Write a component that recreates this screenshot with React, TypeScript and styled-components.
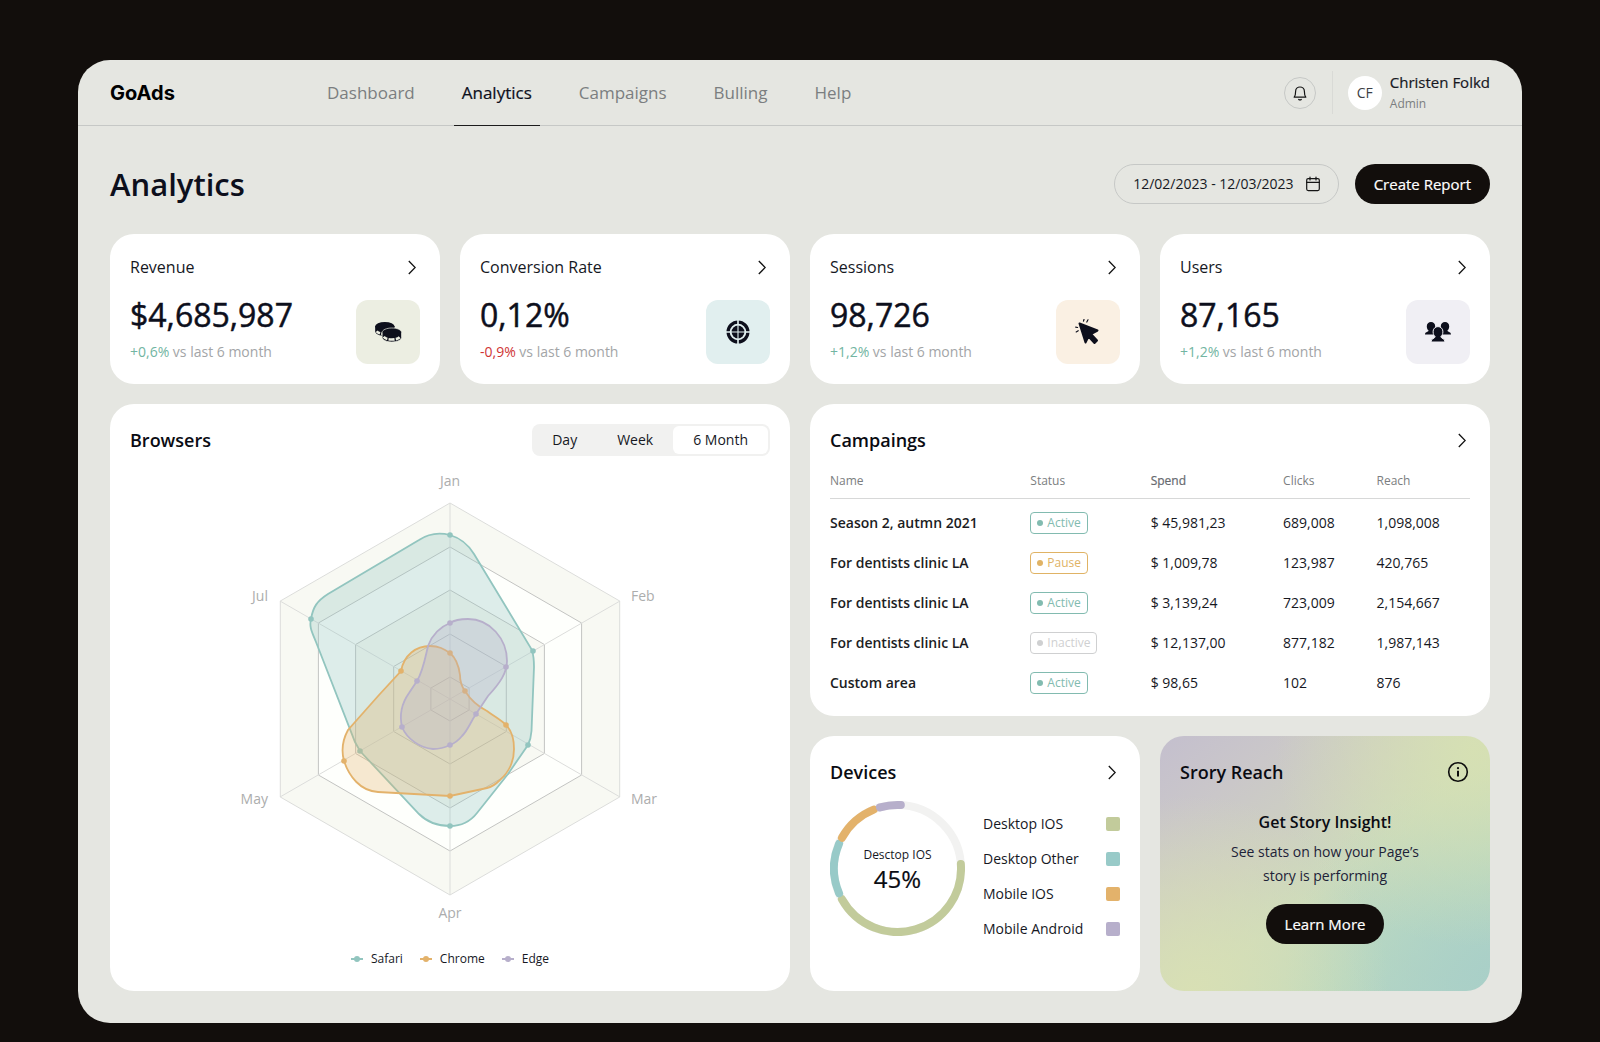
import React, { useState } from "react";
import styled, { createGlobalStyle, css } from "styled-components";

const color = {
  backdrop: "#120e0c",
  panel: "#e5e6e1",
  card: "#ffffff",
  ink: "#0d0f1c",
  black: "#120e0c",
  text: "#16181f",
  grey: "#7b7e80",
  soft: "#a3a5a7",
  line: "#c6c8c6",
  teal: "#92c5bf",
  aqua: "#98cac8",
  orange: "#e3b26b",
  lavender: "#b7afcb",
  olive: "#c2cb9b",
};

/* Open Sans ships regular and semibold only; a hairline outline gives the step between. */
const medium = css`
  -webkit-text-stroke: 0.2px currentColor;
`;

const GlobalStyle = createGlobalStyle`
  *, *::before, *::after { box-sizing: border-box; }
  body {
    margin: 0;
    background: ${color.backdrop};
    color: ${color.text};
    font-family: "Open Sans", "Noto Sans", sans-serif;
    font-size: 14px;
    line-height: 20px;
    -webkit-font-smoothing: antialiased;
  }
  h1, h2, h3, p, ul { margin: 0; padding: 0; }
  ul { list-style: none; }
  button { font: inherit; color: inherit; cursor: pointer; }
  a { color: inherit; text-decoration: none; }
`;

/* ---------- Shell ---------- */

const Page = styled.div`
  padding: 60px 78px 20px;
`;

const Panel = styled.div`
  background: ${color.panel};
  border-radius: 32px;
  overflow: hidden;
`;

const TopBar = styled.header`
  display: flex;
  align-items: stretch;
  height: 66px;
  padding: 0 32px;
  border-bottom: 1px solid ${color.line};
`;

const Logo = styled.a`
  flex: 0 0 209px;
  align-self: center;
  font-family: Inter, "Open Sans", sans-serif;
  font-size: 20px;
  font-weight: 700;
  line-height: 24px;
  color: #000;
`;

const Nav = styled.nav`
  display: flex;
  gap: 31px;
`;

const NavLink = styled.a<{ $active?: boolean }>`
  display: flex;
  align-items: center;
  margin-bottom: -1px;
  padding: 0 8px;
  font-size: 17px;
  color: ${(p) => (p.$active ? color.ink : color.grey)};
  border-bottom: 1px solid ${(p) => (p.$active ? "#1c1c1c" : "transparent")};
  ${(p) => p.$active && medium}
`;

const Account = styled.div`
  display: flex;
  align-items: center;
  margin-left: auto;
`;

const BellButton = styled.button`
  display: grid;
  place-items: center;
  width: 32px;
  height: 32px;
  padding: 0;
  background: none;
  border: 1px solid ${color.line};
  border-radius: 50%;
`;

const Divider = styled.span`
  width: 1px;
  height: 43px;
  margin: 0 15px 0 16px;
  background: #d9dad6;
`;

const Avatar = styled.span`
  display: grid;
  place-items: center;
  width: 34px;
  height: 34px;
  margin-right: 8px;
  border-radius: 50%;
  background: #fff;
  color: #3c3f45;
`;

const UserName = styled.div`
  ${medium}
  font-size: 15px;
  line-height: 22px;
`;

const UserRole = styled.div`
  font-size: 12px;
  line-height: 22px;
  color: ${color.grey};
`;

const Content = styled.main`
  padding: 38px 32px 32px;
`;

const Heading = styled.div`
  display: flex;
  align-items: center;
  gap: 16px;
  margin-bottom: 30px;
`;

const PageTitle = styled.h1`
  flex: 1;
  font-size: 31px;
  font-weight: 600;
  line-height: 38px;
  color: ${color.ink};
`;

const DateButton = styled.button`
  display: flex;
  align-items: center;
  gap: 12px;
  height: 40px;
  padding: 0 18px;
  background: none;
  border: 1px solid ${color.line};
  border-radius: 20px;
`;

const DarkButton = styled.button`
  ${medium}
  height: 40px;
  padding: 0 19px;
  border: 0;
  border-radius: 20px;
  background: ${color.black};
  color: #fff;
  font-size: 15px;
`;

const Board = styled.div`
  display: grid;
  grid-template-columns: repeat(4, minmax(0, 1fr));
  gap: 20px;
`;

/* ---------- Cards ---------- */

const Card = styled.section<{ $span?: number; $rows?: number }>`
  grid-column: span ${(p) => p.$span ?? 1};
  grid-row: span ${(p) => p.$rows ?? 1};
  display: flex;
  flex-direction: column;
  padding: 20px;
  border-radius: 24px;
  background: ${color.card};
`;

const CardHead = styled.div`
  display: flex;
  align-items: center;
  justify-content: space-between;
  height: 32px;
`;

const CardTitle = styled.h2`
  font-size: 18px;
  font-weight: 600;
  line-height: 26px;
  color: #0a0b12;
`;

const IconButton = styled.button`
  display: grid;
  place-items: center;
  width: 24px;
  height: 24px;
  padding: 0;
  border: 0;
  background: none;
`;

const OpenButton = styled(IconButton)`
  margin-right: -4px;
`;

const StatHead = styled(CardHead)`
  height: 26px;
  margin-bottom: 14px;
`;

const StatTitle = styled.h2`
  font-size: 16px;
  font-weight: 400;
  line-height: 26px;
`;

const StatBody = styled.div`
  display: flex;
  align-items: flex-end;
  justify-content: space-between;
`;

const StatValue = styled.div`
  margin-bottom: 5px;
  font-size: 32px;
  line-height: 41px;
  color: ${color.ink};
  -webkit-text-stroke: 0.5px currentColor;
`;

const StatNote = styled.div`
  line-height: 24px;
  color: ${color.soft};
`;

const Delta = styled.span<{ $down?: boolean }>`
  color: ${(p) => (p.$down ? "#cf3434" : "#72b5a2")};
`;

const Tile = styled.div<{ $bg: string }>`
  display: grid;
  place-items: center;
  width: 64px;
  height: 64px;
  border-radius: 12px;
  background: ${(p) => p.$bg};
`;

/* ---------- Browsers ---------- */

const Segments = styled.div`
  display: flex;
  padding: 2px;
  border-radius: 8px;
  background: #f1f1f0;
`;

const Segment = styled.button`
  height: 28px;
  padding: 0 20px;
  border: 0;
  border-radius: 6px;
  background: transparent;
  line-height: 28px;

  &:first-child {
    padding-left: 18px;
  }

  &[aria-pressed="true"] {
    background: #fff;
  }
`;

const ChartArea = styled.div`
  display: flex;
  flex: 1;
  justify-content: center;
  align-items: center;
  padding-bottom: 7px;

  svg {
    display: block;
    width: 460px;
    height: 464px;
  }
`;

const AxisLabel = styled.text`
  font-size: 14px;
  fill: #acadad;
`;

const Legend = styled.ul`
  display: flex;
  justify-content: center;
  gap: 17px;
  margin-bottom: 2px;
  font-size: 12px;
`;

const LegendItem = styled.li`
  display: flex;
  align-items: center;
  gap: 8px;
`;

/* ---------- Campaigns ---------- */

const CampaignCard = styled(Card)`
  padding-bottom: 13px;
`;

const Table = styled.table`
  width: 100%;
  border-collapse: collapse;
  table-layout: fixed;
`;

const HeadCell = styled.th<{ $width: string; $strong?: boolean }>`
  width: ${(p) => p.$width};
  height: 42px;
  padding: 8px 0 0;
  vertical-align: top;
  border-bottom: 1px solid #d7d8d8;
  font-size: 12px;
  font-weight: 400;
  line-height: 34px;
  text-align: left;
  color: ${(p) => (p.$strong ? "#66696f" : color.grey)};
  ${(p) => p.$strong && medium}
`;

const Rows = styled.tbody`
  &::before {
    content: "";
    display: block;
    height: 4px;
  }
`;

const Cell = styled.td<{ $strong?: boolean }>`
  height: 40px;
  padding: 0;
  font-weight: ${(p) => (p.$strong ? 600 : 400)};
  color: ${(p) => (p.$strong ? "#1c1d23" : color.text)};
`;

const Badge = styled.span<{ $tone: string }>`
  display: inline-flex;
  align-items: center;
  gap: 4px;
  height: 22px;
  padding: 0 6px;
  border: 1px solid ${(p) => p.$tone};
  border-radius: 4px;
  font-size: 12px;
  line-height: 20px;
  color: ${(p) => p.$tone};
  vertical-align: middle;

  &::before {
    content: "";
    width: 6px;
    height: 6px;
    border-radius: 50%;
    background: currentColor;
  }
`;

/* ---------- Devices ---------- */

const DeviceCard = styled(Card)`
  min-height: 255px;
`;

const DeviceBody = styled.div`
  display: flex;
  gap: 18px;
  margin-top: 13px;
`;

const Donut = styled.div`
  display: grid;
  flex: 0 0 135px;
  height: 135px;

  > * {
    grid-area: 1 / 1;
  }
`;

const DonutText = styled.div`
  align-self: center;
  text-align: center;
`;

const DonutLabel = styled.div`
  font-size: 12px;
  line-height: 20px;
`;

const DonutValue = styled.div`
  ${medium}
  font-size: 24px;
  line-height: 28px;
  color: #0a0b12;
`;

const DeviceList = styled.ul`
  flex: 1;
  padding-top: 5px;
`;

const DeviceRow = styled.li`
  display: flex;
  align-items: center;
  justify-content: space-between;
  height: 35px;
`;

const Swatch = styled.span<{ $bg: string }>`
  width: 14px;
  height: 14px;
  border-radius: 2px;
  background: ${(p) => p.$bg};
`;

/* ---------- Story reach ---------- */

const StoryCard = styled(Card)`
  background:
    radial-gradient(circle at 95% 5%, rgba(215, 225, 178, 0.9), rgba(215, 225, 178, 0) 50%),
    radial-gradient(circle at 10% 100%, rgba(217, 224, 180, 0.95), rgba(217, 224, 180, 0) 50%),
    radial-gradient(circle at 100% 95%, rgba(168, 207, 200, 0.9), rgba(168, 207, 200, 0) 50%),
    linear-gradient(to bottom right, #c4bfce 0%, #cac7c9 20%, #cdcfc2 38%, #cbdabd 55%, #bddac0 75%, #b2d3c6 100%);
`;

const StoryBody = styled.div`
  display: flex;
  flex-direction: column;
  align-items: center;
  padding-top: 22px;
  text-align: center;
`;

const StoryTitle = styled.h3`
  margin-bottom: 6px;
  font-size: 16px;
  font-weight: 600;
  line-height: 24px;
  color: #0a0b12;
`;

const StoryText = styled.p`
  max-width: 210px;
  margin-bottom: 16px;
  line-height: 24px;
  color: #1d2238;
`;

/* ---------- Icons ---------- */

const Chevron = () => (
  <svg width="8" height="15" viewBox="0 0 8 15" fill="none" stroke="#111" strokeWidth="1.3">
    <path d="M.8 1l6.4 6.5L.8 14" />
  </svg>
);

const Bell = () => (
  <svg width="16" height="16" viewBox="0 0 16 16" fill="none" stroke="#151515" strokeWidth="1.2" strokeLinecap="round" strokeLinejoin="round">
    <path d="M2.2 12.2C3.4 10.8 3.6 9.6 3.6 6.4a4.4 4.4 0 0 1 8.8 0c0 3.2.2 4.4 1.4 5.8z" />
    <path d="M6.7 14.5c.8.6 1.8.6 2.6 0" />
  </svg>
);

const Calendar = () => (
  <svg width="14" height="16" viewBox="0 0 14 16" fill="none" stroke="#151515" strokeWidth="1.2" strokeLinecap="round">
    <rect x=".7" y="2.6" width="12.6" height="12" rx="1.5" />
    <path d="M.7 6.4h12.6M4 1v3M10 1v3" />
  </svg>
);

const Coins = ({ bg }: { bg: string }) => (
  <svg width="27" height="20" viewBox="0 0 80 60">
    <path d="M0 13v15c0 8 13 14 29 14s29-6 29-14V13z" fill={color.ink} />
    <ellipse cx="29" cy="13" rx="29" ry="13" fill={color.ink} />
    <path d="M4.5 27.5c4 5.5 13 8 24.5 8 10 0 18-2 22-6" fill="none" stroke={bg} strokeWidth="8" strokeDasharray="12 4 17 4" />
    <path d="M21 31v15c0 8 13 14 29 14s29-6 29-14V31c0-7-13-13-29-13s-29 6-29 13z" fill={color.ink} stroke={bg} strokeWidth="2" />
    <path d="M25.5 44.5c4 5.5 13 8 24.5 8s20.5-2.5 24.5-8" fill="none" stroke={bg} strokeWidth="8" strokeDasharray="13 4 17 4" />
  </svg>
);

const Target = ({ bg }: { bg: string }) => (
  <svg width="24" height="24" viewBox="0 0 24 24">
    <circle cx="12" cy="12" r="9.9" fill="none" stroke={color.ink} strokeWidth="3.2" />
    <path d="M12 0v24M0 12h24" stroke={bg} strokeWidth="1.6" />
    <circle cx="12" cy="12" r="6.4" fill={color.ink} />
    <path d="M12 5v14M5 12h14" stroke={bg} strokeWidth="1.1" />
  </svg>
);

const Cursor = () => (
  <svg width="26" height="26" viewBox="0 0 26 26" fill={color.ink} stroke={color.ink} strokeLinejoin="round" strokeLinecap="round">
    <path d="M4.5 4.5l18 7-6.500 3.500 6 6.500-2.500 2.500-6-6.500-3 6z" strokeWidth="2" />
    <path d="M8.500 2.200l.5-1.700M11.800 3l1.200-2.200M2.600 8.500l-1.900-.3M3.200 11.700l-2 1.200" strokeWidth="1.2" fill="none" />
  </svg>
);

const People = ({ bg }: { bg: string }) => (
  <svg width="26" height="20" viewBox="0 0 26 20" fill={color.ink}>
    <path d="M6 0a4.2 4.2 0 0 1 4.2 4.4c0 2-1 3.6-2 4.4.6 1.6 2.2 1.8 2.4 3.8H0c0-2.6 2.6-2.4 3.7-3.8-1.100-.9-1.900-2.500-1.900-4.400A4.200 4.200 0 0 1 6 0z" />
    <path d="M20 0a4.200 4.200 0 0 0-4.200 4.400c0 2 1 3.600 2 4.400-.6 1.600-2.200 1.800-2.400 3.800H26c0-2.600-2.600-2.400-3.700-3.800 1.100-.9 1.900-2.500 1.900-4.400A4.200 4.200 0 0 0 20 0z" />
    <path d="M13 4.600a4.900 4.900 0 0 1 4.900 5.200c0 2.200-.9 3.900-2.100 5 .5 1.900 4.200 1.500 4.200 5.200H6c0-3.700 3.700-3.300 4.200-5.200-1.200-1.100-2.100-2.800-2.100-5A4.900 4.900 0 0 1 13 4.600z" stroke={bg} strokeWidth="1" />
  </svg>
);

const Info = () => (
  <svg width="22" height="22" viewBox="0 0 22 22" fill="none" stroke="#0d0d0d" strokeWidth="1.6">
    <circle cx="11" cy="11" r="9.3" />
    <path d="M11 9.8v5.6" strokeWidth="2" />
    <circle cx="11" cy="7.2" r="1.1" fill="#0d0d0d" stroke="none" />
  </svg>
);

const Marker = ({ tone }: { tone: string }) => (
  <svg width="12" height="8" viewBox="0 0 12 8">
    <path d="M0 4h12" stroke={tone} strokeWidth="2" />
    <circle cx="6" cy="4" r="3" fill={tone} />
  </svg>
);

/* ---------- Radar chart ---------- */

const hexagon = (r: number) =>
  Array.from({ length: 6 }, (_, i) => {
    const a = (Math.PI / 3) * i - Math.PI / 2;
    return `${(r * Math.cos(a)).toFixed(1)},${(r * Math.sin(a)).toFixed(1)}`;
  }).join(" ");

const rings = [
  { r: 196, fill: "#f8f9f3", stroke: "#dcdddb" },
  { r: 152, fill: "#fefffc", stroke: "#c3c4c2" },
  { r: 109, fill: "#f8f9f3", stroke: "#c3c4c2" },
  { r: 65, fill: "#f8f9f3", stroke: "#c3c4c2" },
  { r: 22, fill: "#f8f9f3", stroke: "#c3c4c2" },
];

const series = [
  {
    name: "Safari",
    tone: color.teal,
    d: "M0-164C10-161 18-155 24-145L82-49C84-42 84-38 84-32L81.5 32C81 39 80 42 78 46L58 75 27 114C20 123 10 127 0 127C-12 127-22 124-31 115L-90 52-95 43-134-57C-138-67-141-72-139-80C-137-92-133-98-122-105L-31-159C-22-165-12-167 0-164Z",
    points: [[0, -164], [83, -48], [78, 46], [0, 127], [-90, 52], [-139, -80]],
  },
  {
    name: "Chrome",
    tone: color.orange,
    d: "M0-46C7-40 9-32 10-24C10-17 12-12 15-8C20 0 29 8 37 12C45 18 51 21 56 26C62 32 64 40 64 50C64 62 59 73 50 81C46 85 42 88 37 89L0 97-72 93C-90 92-101 77-106 62C-109 51-108 42-102 31L-71-4-49-28C-46-44-34-53-20-53C-11-53-6-50 0-46Z",
    points: [[0, -46], [15, -8], [56, 26], [0, 97], [-106, 62], [-49, -28]],
  },
  {
    name: "Edge",
    tone: color.lavender,
    d: "M0-76C6-80 12-80 18-80C40-80 57-60 57-38C57-26 50-16 38-3L26 15C20 24 18 31 12 37C8 42 5 44 0 46C-6 49-12 50-17 50C-30 49-43 40-48 28C-51 15-48 4-41-6L-33-18C-27-28-25-40-22-53C-18-64-10-72 0-76Z",
    points: [[0, -76], [56, -32], [26, 15], [0, 46], [-48, 28], [-33, -18]],
  },
];

const axisLabels = [
  { text: "Jan", x: 0, y: -213, anchor: "middle" },
  { text: "Feb", x: 181, y: -98, anchor: "start" },
  { text: "Mar", x: 181, y: 105, anchor: "start" },
  { text: "Apr", x: 0, y: 219, anchor: "middle" },
  { text: "May", x: -182, y: 105, anchor: "end" },
  { text: "Jul", x: -182, y: -98, anchor: "end" },
] as const;

const Radar = () => (
  <svg viewBox="-230 -232 460 464" role="img" aria-label="Browser share by month">
    {rings.map((ring) => (
      <polygon key={ring.r} points={hexagon(ring.r)} fill={ring.fill} stroke={ring.stroke} />
    ))}
    <path d="M0-196V196M-170-98L170 98M-170 98L170-98" stroke="#dcdddb" />
    {series.map((s) => (
      <g key={s.name}>
        <path d={s.d} fill={s.tone} fillOpacity="0.3" stroke={s.tone} strokeWidth="1.8" />
        {s.points.map(([x, y]) => (
          <circle key={`${x},${y}`} cx={x} cy={y} r="2.8" fill={s.tone} />
        ))}
      </g>
    ))}
    {axisLabels.map((l) => (
      <AxisLabel key={l.text} x={l.x} y={l.y} textAnchor={l.anchor}>
        {l.text}
      </AxisLabel>
    ))}
  </svg>
);

/* ---------- Donut ---------- */

const arcs = [
  { from: -4, to: 151, tone: color.olive },
  { from: 157, to: 203, tone: color.aqua },
  { from: 209, to: 248, tone: color.orange },
  { from: 254, to: 273, tone: color.lavender },
];

const arcPath = (from: number, to: number) => {
  const point = (deg: number) => {
    const a = (deg * Math.PI) / 180;
    return `${(67.5 + 63.5 * Math.cos(a)).toFixed(2)} ${(67.5 + 63.5 * Math.sin(a)).toFixed(2)}`;
  };
  return `M${point(from)}A63.5 63.5 0 0 1 ${point(to)}`;
};

/* ---------- Data ---------- */

const navItems = ["Dashboard", "Analytics", "Campaigns", "Bulling", "Help"];

const stats = [
  { title: "Revenue", value: "$4,685,987", delta: "+0,6%", bg: "#eceee2", Icon: Coins },
  { title: "Conversion Rate", value: "0,12%", delta: "-0,9%", down: true, bg: "#e1efef", Icon: Target },
  { title: "Sessions", value: "98,726", delta: "+1,2%", bg: "#faf0e3", Icon: Cursor },
  { title: "Users", value: "87,165", delta: "+1,2%", bg: "#f0eff4", Icon: People },
];

const tones: Record<string, string> = {
  Active: "#82bbb0",
  Pause: "#e0b365",
  Inactive: "#cfd0d1",
};

const campaigns = [
  ["Season 2, autmn 2021", "Active", "$ 45,981,23", "689,008", "1,098,008"],
  ["For dentists clinic LA", "Pause", "$ 1,009,78", "123,987", "420,765"],
  ["For dentists clinic LA", "Active", "$ 3,139,24", "723,009", "2,154,667"],
  ["For dentists clinic LA", "Inactive", "$ 12,137,00", "877,182", "1,987,143"],
  ["Custom area", "Active", "$ 98,65", "102", "876"],
];

const devices = [
  { name: "Desktop IOS", tone: color.olive },
  { name: "Desktop Other", tone: color.aqua },
  { name: "Mobile IOS", tone: color.orange },
  { name: "Mobile Android", tone: color.lavender },
];

export default function App() {
  const [period, setPeriod] = useState("6 Month");

  return (
    <>
      <GlobalStyle />
      <Page>
        <Panel>
          <TopBar>
            <Logo href="#">GoAds</Logo>
            <Nav>
              {navItems.map((item) => (
                <NavLink key={item} href="#" $active={item === "Analytics"}>
                  {item}
                </NavLink>
              ))}
            </Nav>
            <Account>
              <BellButton aria-label="Notifications">
                <Bell />
              </BellButton>
              <Divider />
              <Avatar>CF</Avatar>
              <div>
                <UserName>Christen Folkd</UserName>
                <UserRole>Admin</UserRole>
              </div>
            </Account>
          </TopBar>

          <Content>
            <Heading>
              <PageTitle>Analytics</PageTitle>
              <DateButton>
                12/02/2023 - 12/03/2023
                <Calendar />
              </DateButton>
              <DarkButton>Create Report</DarkButton>
            </Heading>

            <Board>
              {stats.map(({ title, value, delta, down, bg, Icon }) => (
                <Card key={title}>
                  <StatHead>
                    <StatTitle>{title}</StatTitle>
                    <OpenButton aria-label={`Open ${title}`}>
                      <Chevron />
                    </OpenButton>
                  </StatHead>
                  <StatBody>
                    <div>
                      <StatValue>{value}</StatValue>
                      <StatNote>
                        <Delta $down={down}>{delta}</Delta> vs last 6 month
                      </StatNote>
                    </div>
                    <Tile $bg={bg}>
                      <Icon bg={bg} />
                    </Tile>
                  </StatBody>
                </Card>
              ))}

              <Card $span={2} $rows={2}>
                <CardHead>
                  <CardTitle>Browsers</CardTitle>
                  <Segments>
                    {["Day", "Week", "6 Month"].map((p) => (
                      <Segment key={p} aria-pressed={p === period} onClick={() => setPeriod(p)}>
                        {p}
                      </Segment>
                    ))}
                  </Segments>
                </CardHead>
                <ChartArea>
                  <Radar />
                </ChartArea>
                <Legend>
                  {series.map((s) => (
                    <LegendItem key={s.name}>
                      <Marker tone={s.tone} />
                      {s.name}
                    </LegendItem>
                  ))}
                </Legend>
              </Card>

              <CampaignCard $span={2}>
                <CardHead>
                  <CardTitle>Campaings</CardTitle>
                  <OpenButton aria-label="Open campaings">
                    <Chevron />
                  </OpenButton>
                </CardHead>
                <Table>
                  <thead>
                    <tr>
                      <HeadCell $width="31.3%">Name</HeadCell>
                      <HeadCell $width="18.8%">Status</HeadCell>
                      <HeadCell $width="20.7%" $strong>Spend</HeadCell>
                      <HeadCell $width="14.6%">Clicks</HeadCell>
                      <HeadCell $width="14.6%">Reach</HeadCell>
                    </tr>
                  </thead>
                  <Rows>
                    {campaigns.map(([name, status, spend, clicks, reach]) => (
                      <tr key={spend}>
                        <Cell $strong>{name}</Cell>
                        <Cell>
                          <Badge $tone={tones[status]}>{status}</Badge>
                        </Cell>
                        <Cell>{spend}</Cell>
                        <Cell>{clicks}</Cell>
                        <Cell>{reach}</Cell>
                      </tr>
                    ))}
                  </Rows>
                </Table>
              </CampaignCard>

              <DeviceCard>
                <CardHead>
                  <CardTitle>Devices</CardTitle>
                  <OpenButton aria-label="Open devices">
                    <Chevron />
                  </OpenButton>
                </CardHead>
                <DeviceBody>
                  <Donut>
                    <svg width="135" height="135" viewBox="0 0 135 135" fill="none" strokeWidth="8" strokeLinecap="round">
                      <circle cx="67.5" cy="67.5" r="63.5" stroke="#f2f2f1" />
                      {arcs.map((a) => (
                        <path key={a.from} d={arcPath(a.from, a.to)} stroke={a.tone} />
                      ))}
                    </svg>
                    <DonutText>
                      <DonutLabel>Desctop IOS</DonutLabel>
                      <DonutValue>45%</DonutValue>
                    </DonutText>
                  </Donut>
                  <DeviceList>
                    {devices.map((d) => (
                      <DeviceRow key={d.name}>
                        {d.name}
                        <Swatch $bg={d.tone} />
                      </DeviceRow>
                    ))}
                  </DeviceList>
                </DeviceBody>
              </DeviceCard>

              <StoryCard>
                <CardHead>
                  <CardTitle>Srory Reach</CardTitle>
                  <IconButton aria-label="About story reach">
                    <Info />
                  </IconButton>
                </CardHead>
                <StoryBody>
                  <StoryTitle>Get Story Insight!</StoryTitle>
                  <StoryText>See stats on how your Page’s story is performing</StoryText>
                  <DarkButton>Learn More</DarkButton>
                </StoryBody>
              </StoryCard>
            </Board>
          </Content>
        </Panel>
      </Page>
    </>
  );
}
